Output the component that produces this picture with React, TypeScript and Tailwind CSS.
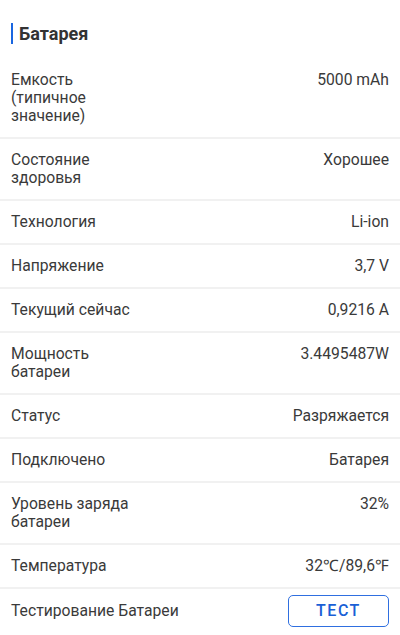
const rows: { label: string; value: string }[] = [
  { label: "Емкость (типичное значение)", value: "5000 mAh" },
  { label: "Состояние здоровья", value: "Хорошее" },
  { label: "Технология", value: "Li-ion" },
  { label: "Напряжение", value: "3,7 V" },
  { label: "Текущий сейчас", value: "0,9216 A" },
  { label: "Мощность батареи", value: "3.4495487W" },
  { label: "Статус", value: "Разряжается" },
  { label: "Подключено", value: "Батарея" },
  { label: "Уровень заряда батареи", value: "32%" },
  { label: "Температура", value: "32℃/89,6℉" },
]

export default function App() {
  return (
    <div className="min-h-[635px] bg-white font-['Roboto',sans-serif] text-[#3a3a3a]">
      {/* Header */}
      <div className="flex items-center gap-[6px] px-[11px] pt-[23px] pb-[15px]">
        <div className="h-[21px] w-[2px] bg-[#1a66e0]" />
        <h2 className="text-[18px] leading-[21px] font-bold text-[#333333]">Батарея</h2>
      </div>

      {/* Rows */}
      <div>
        {rows.map((row) => (
          <div
            key={row.label}
            className="flex items-start justify-between border-b-2 border-[#f1f1f1] px-[11px] py-3 text-[15.7px] leading-[18px]"
          >
            <span className="w-[130px]">{row.label}</span>
            <span className="flex-1 text-right">{row.value}</span>
          </div>
        ))}
        <div className="flex items-center justify-between px-[11px] pt-[6px] pb-[6px] text-[15.7px] leading-[18px]">
          <span>Тестирование Батареи</span>
          <button className="h-[32px] w-[101px] rounded-[5px] border-[1.5px] border-[#2f6fe0] text-[16px] font-medium tracking-[1.5px] text-[#1a5fd6]">
            ТЕСТ
          </button>
        </div>
      </div>
    </div>
  )
}
